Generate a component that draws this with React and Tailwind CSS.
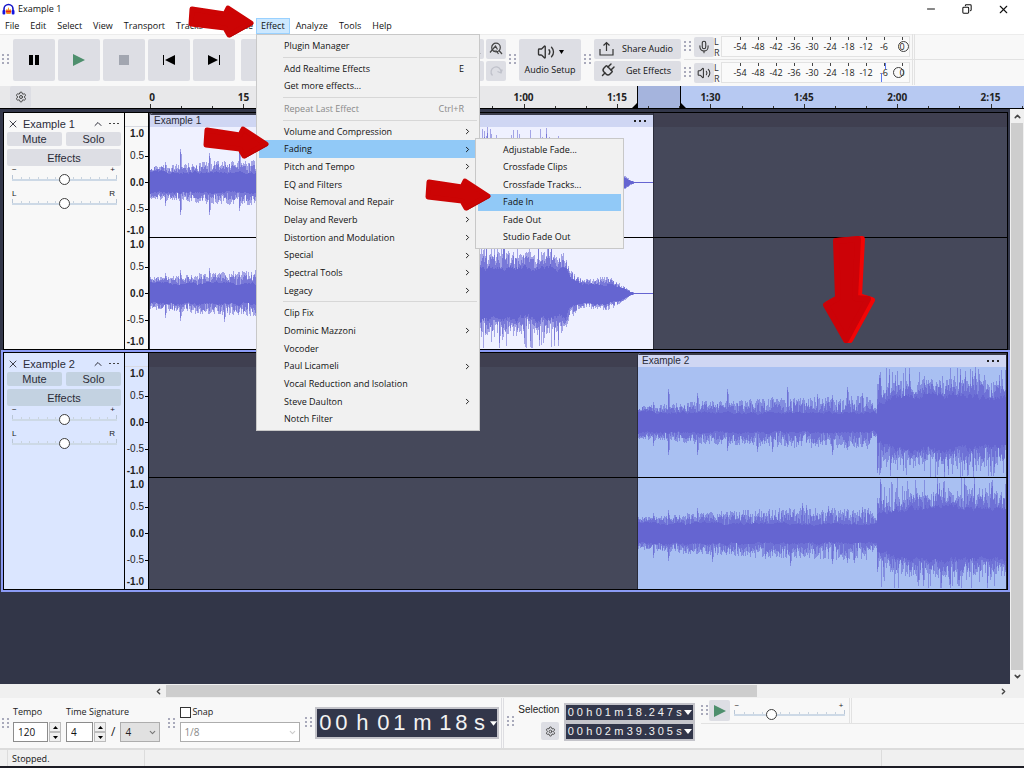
import React from 'react';
import { Settings, Plug, Mic, Volume2, Minus, X, ChevronUp, ChevronDown, ChevronLeft, ChevronRight, Copy } from 'lucide-react';

const MENUS_LEFT = ['File', 'Edit', 'Select', 'View', 'Transport', 'Tracks', 'Generate'];
const MENUS_RIGHT = ['Effect', 'Analyze', 'Tools', 'Help'];

const EFFECT_MENU = [
  { label: 'Plugin Manager' },
  null,
  { label: 'Add Realtime Effects', key: 'E' },
  { label: 'Get more effects...' },
  null,
  { label: 'Repeat Last Effect', key: 'Ctrl+R', disabled: true },
  null,
  { label: 'Volume and Compression', sub: true },
  { label: 'Fading', sub: true, active: true },
  { label: 'Pitch and Tempo', sub: true },
  { label: 'EQ and Filters', sub: true },
  { label: 'Noise Removal and Repair', sub: true },
  { label: 'Delay and Reverb', sub: true },
  { label: 'Distortion and Modulation', sub: true },
  { label: 'Special', sub: true },
  { label: 'Spectral Tools', sub: true },
  { label: 'Legacy', sub: true },
  null,
  { label: 'Clip Fix' },
  { label: 'Dominic Mazzoni', sub: true },
  { label: 'Vocoder' },
  { label: 'Paul Licameli', sub: true },
  { label: 'Vocal Reduction and Isolation' },
  { label: 'Steve Daulton', sub: true },
  { label: 'Notch Filter' },
];

const FADING_MENU = [
  { label: 'Adjustable Fade...' },
  { label: 'Crossfade Clips' },
  { label: 'Crossfade Tracks...' },
  { label: 'Fade In', active: true },
  { label: 'Fade Out' },
  { label: 'Studio Fade Out' },
];

const TIMES = ['0', '15', '30', '45', '1:00', '1:15', '1:30', '1:45', '2:00', '2:15'];
const DECIBELS = ['-54', '-48', '-42', '-36', '-30', '-24', '-18', '-12', '-6', '0'];

// --- waveform ---------------------------------------------------------

const RMS = [[0, 10], [238, 9], [239, 19], [258, 25], [300, 27], [365, 24], [415, 24], [419, 17], [432, 9], [458, 9], [468, 6], [475, 4], [480, 1], [485, 0], [504, 0]];
const PEAK = [[0, 16], [60, 21], [150, 25], [230, 26], [238, 14], [239, 38], [260, 42], [330, 44], [414, 40], [419, 25], [432, 14], [458, 17], [468, 11], [475, 6], [480, 2], [485, 0], [504, 0]];

// [channel][up / down]: x offset -> height of the beats that stick out
const SPIKES = [
  [
    { 15: 20, 30: 33, 59: 29, 89: 33, 120: 22, 134: 25, 149: 35, 164: 22, 179: 28, 194: 27, 209: 35, 224: 29, 241: 47 },
    { 15: 23, 30: 32, 59: 32, 89: 28, 119: 29, 134: 29, 149: 24, 164: 18, 194: 32, 209: 27, 224: 24, 239: 50, 242: 50 },
  ],
  [
    { 15: 20, 30: 23, 59: 25, 89: 21, 119: 19, 164: 30, 168: 28, 190: 27, 209: 24, 224: 26, 242: 54 },
    { 15: 24, 30: 27, 59: 20, 74: 28, 89: 18, 127: 25, 152: 32, 194: 30, 209: 29, 216: 29, 239: 38 },
  ],
];

function at(points, x) {
  for (let i = 1; i < points.length; i++) {
    const [x0, y0] = points[i - 1];
    const [x1, y1] = points[i];
    if (x <= x1) return y0 + ((y1 - y0) * (x - x0)) / (x1 - x0);
  }
  return 0;
}

function buildWave(channel, length) {
  let seed = 7919 + channel * 104729;
  const rand = () => {
    seed = (seed * 1664525 + 1013904223) % 4294967296;
    return seed / 4294967296;
  };
  const mid = 55;
  const slow = [1, 1];
  let core = '';
  let strong = '';
  let faint = '';
  for (let x = 0; x < length; x++) {
    const rms = at(RMS, x);
    const peak = at(PEAK, x);
    const loud = x > 240 && x < 410;
    const half = [0, 1].map((side) => {
      // the level wanders slowly, so that neighbouring columns look alike
      slow[side] = slow[side] * 0.7 + (0.65 + rand() * 0.7) * 0.3;
      const c = rms * slow[side];
      let s = c + (peak - c) * rand() * 0.7;
      let p = s + (peak - s) * rand();
      if (loud && rand() > 0.74) {
        p = 42 + rand() * 14;
        if (rand() > 0.6) s = p - 6;
      }
      const spike = SPIKES[channel][side][x];
      const tail = SPIKES[channel][side][x - 1];
      if (spike) {
        p = spike;
        s = spike - 3;
      } else if (tail) {
        p = Math.max(p, tail - 5);
      }
      return [c, s, p].map((v) => Math.max(0, Math.min(55, Math.round(Math.max(v, c)))));
    });
    const [[cu, su, pu], [cd, sd, pd]] = half;
    core += `M${x} ${mid - cu}h1v${cu + cd + 1}h-1z`;
    strong += `M${x} ${mid - su}h1v${su + sd + 1}h-1z`;
    faint += `M${x} ${mid - pu}h1v${pu + pd + 1}h-1z`;
  }
  return { core, strong, faint };
}

const WAVES = [buildWave(0, 504), buildWave(1, 504)];

function Waveform({ channel }) {
  const wave = WAVES[channel];
  return (
    <svg className="block" width="504" height="110" shapeRendering="crispEdges" aria-hidden="true">
      <path d={wave.faint} fill="#6565d1" fillOpacity="0.55" />
      <path d={wave.strong} fill="#6565d1" fillOpacity="0.7" />
      <path d={wave.core} fill="#6565d1" />
    </svg>
  );
}

// --- small parts ------------------------------------------------------

function Grip() {
  return (
    <svg className="shrink-0" width="7" height="12" fill="#a9aabb" aria-hidden="true">
      {[0, 4, 8].map((y) => (
        <React.Fragment key={y}>
          <rect x="0" y={y} width="2" height="2" />
          <rect x="5" y={y} width="2" height="2" />
        </React.Fragment>
      ))}
    </svg>
  );
}

const TOOL_BUTTON = 'flex items-center justify-center shrink-0 rounded-[2px] bg-[#dddee4]';

function TransportButton({ label, children }) {
  return (
    <button aria-label={label} className={`${TOOL_BUTTON} w-[42px] h-[42px]`}>
      <svg width="20" height="14" viewBox="0 0 20 14">{children}</svg>
    </button>
  );
}

function ZoomGlyph({ kind }) {
  if (kind === 'redo' || kind === 'undo') {
    return (
      <svg width="14" height="14" viewBox="0 0 14 14" fill="none" stroke={kind === 'redo' ? '#bfc1ca' : '#555'} strokeWidth="1.3">
        <path d={kind === 'redo' ? 'M3.5 11.5A5 5 0 1 1 12 8.5M8.5 7.5l3.5 1.5 1.2-3.5' : 'M10.5 11.5A5 5 0 1 0 2 8.5M5.5 7.5L2 9 .8 5.5'} />
      </svg>
    );
  }
  return (
    <svg width="14" height="14" viewBox="0 0 14 14" fill="none" stroke="#444" strokeWidth="1.2">
      <circle cx="7" cy="5.5" r="4.3" />
      <path d="M10 8.5l3 3.5M1 10.5L6.5 4 8.5 7.5M4 9h3.5l2 3" />
    </svg>
  );
}

const THUMB =
  'absolute inset-0 w-full h-full appearance-none bg-transparent [&::-webkit-slider-thumb]:appearance-none [&::-webkit-slider-thumb]:w-[11px] [&::-webkit-slider-thumb]:h-[11px] [&::-webkit-slider-thumb]:rounded-full [&::-webkit-slider-thumb]:border [&::-webkit-slider-thumb]:border-solid [&::-webkit-slider-thumb]:border-[#3f3f3f]';

function Slider({ label, left, right, value = 50 }) {
  return (
    <div className="w-full">
      <div className="flex justify-between h-2 pr-[2px] text-[8px] leading-[8px] text-[#222]">
        <span>{left}</span>
        <span>{right}</span>
      </div>
      <div className="relative h-[11px]">
        <div className="flex justify-between items-end h-[7px] border-b-2 border-[#cdd9e6]">
          {Array.from({ length: 13 }, (_, i) => (
            <span key={i} className={i % 12 === 0 ? 'w-px h-1 bg-[#b9c6d6]' : 'w-px h-[2px] bg-[#c9d3de]'} />
          ))}
        </div>
        <input type="range" aria-label={label} defaultValue={value} className={`${THUMB} [&::-webkit-slider-thumb]:bg-white`} />
      </div>
    </div>
  );
}

function Meter({ label, icon, level, children }) {
  return (
    <div className="flex items-center h-[25px]">
      <Grip />
      <button aria-label={label} className={`${TOOL_BUTTON} w-5 h-5 ml-[3px] text-[#333]`}>{icon}</button>
      <div className="flex flex-col w-[7px] text-[9px] leading-[11px] text-[#333]">
        <span>L</span>
        <span>R</span>
      </div>
      <div className="relative flex items-center w-[189px] h-[21px] pl-[9px] border border-[#e2e2e2] bg-[#fafafa] text-[9px] leading-[9px] text-[#222]">
        {DECIBELS.map((db) => (
          <div key={db} className="flex flex-col items-center w-[18px] h-full shrink-0">
            <span className="w-px h-[3px] bg-[#444]" />
            <span className="mt-[2px]">{db}</span>
          </div>
        ))}
        {children}
        <input type="range" aria-label={`${label} level`} defaultValue={level} className={THUMB} />
      </div>
    </div>
  );
}

// --- tracks -----------------------------------------------------------

function ScaleColumn({ selected }) {
  return (
    <div className={`flex flex-col w-6 shrink-0 border-r border-black text-[10px] leading-[12px] text-[#222] ${selected ? 'bg-[#dbe6ff]' : 'bg-[#f8f8f8]'}`}>
      <div className="h-[14px] border-b border-[#d8dae2]" />
      {[0, 1].map((ch) => (
        <div key={ch} className="flex-1 grid grid-rows-[14fr_30fr_23fr_30fr_14fr] items-center justify-items-end">
          {['1.0', '0.5', '0.0', '-0.5', '-1.0'].map((v) => (
            <div key={v} className={`flex items-center gap-px ${v.endsWith('.5') ? '' : 'font-bold'}`}>
              {v}
              <span className={v === '1.0' || v === '-1.0' ? 'w-[3px]' : 'w-[3px] h-px bg-black'} />
            </div>
          ))}
        </div>
      ))}
    </div>
  );
}

function Clip({ name, selected, className }) {
  return (
    <div className={`flex flex-col min-w-0 overflow-hidden border-x border-[#2a2c3a] rounded-tl-[4px] ${selected ? 'bg-[#a9c0f2]' : 'bg-[#eff1ff]'} ${className}`}>
      <div className="flex items-center justify-between h-[14px] shrink-0 pl-1 pr-[7px] border-t-2 border-[#3a3c4c] bg-[#cfd6f3] text-[10px] leading-[12px] text-[#2b2c38]">
        <span>{name}</span>
        <svg width="12" height="2" fill="#222" aria-hidden="true">
          <rect width="2" height="2" />
          <rect x="5" width="2" height="2" />
          <rect x="10" width="2" height="2" />
        </svg>
      </div>
      <div className="flex-1 overflow-hidden"><Waveform channel={0} /></div>
      <div className="flex-1 overflow-hidden"><Waveform channel={1} /></div>
    </div>
  );
}

function Track({ name, selected, children }) {
  const button = `flex items-center justify-center rounded-[2px] ${selected ? 'bg-[#c3d2e1]' : 'bg-[#dddee4]'}`;
  return (
    <section className={`border-2 ${selected ? 'border-[#8b9bf5]' : 'border-[#33374a]'}`}>
      <div className="flex h-[238px] border border-black bg-[#45485a]">
        <div className={`w-[120px] shrink-0 pt-[2px] px-[3px] text-[11px] leading-[14px] text-[#2b2c38] ${selected ? 'bg-[#dbe6ff]' : 'bg-[#f8f8f8]'}`}>
          <div className="flex items-center h-[17px]">
            <button aria-label="Close track" className="w-4"><X size={12} strokeWidth={1.8} /></button>
            <span className="flex-1">{name}</span>
            <button aria-label="Collapse"><ChevronUp size={12} strokeWidth={2} /></button>
            <button aria-label="Track menu" className="pl-[5px] pr-[2px]">
              <svg width="10" height="2" fill="#444"><rect width="2" height="1" /><rect x="4" width="2" height="1" /><rect x="8" width="2" height="1" /></svg>
            </button>
          </div>
          <div className="grid grid-cols-2 gap-x-1 gap-y-[3px]">
            <button className={`${button} h-[14px]`}>Mute</button>
            <button className={`${button} h-[14px]`}>Solo</button>
            <button className={`${button} h-[17px] col-span-2`}>Effects</button>
          </div>
          <div className="flex flex-col gap-[5px] pl-[5px] pr-1">
            <Slider label={`${name} volume`} left="−" right="+" />
            <Slider label={`${name} pan`} left="L" right="R" />
          </div>
        </div>
        <div className="w-px bg-black" />
        <ScaleColumn selected={selected} />
        <div className="relative flex flex-1 min-w-0 bg-linear-to-b from-[#3f3f50] from-[14px] to-[#45485a] to-[14px]">
          {children}
          {/* line between the left and the right channel */}
          <div className="absolute inset-x-0 top-[124px] h-px bg-black" />
        </div>
      </div>
    </section>
  );
}

function Timeline() {
  return (
    <div className="relative flex h-[23px] shrink-0 border-b border-black bg-[#e8e8ea]">
      <button aria-label="Timeline options" className="flex items-center justify-center w-[21px] ml-[10px] rounded-[2px] bg-[#dddee4] text-[#444]">
        <Settings size={12} strokeWidth={2} />
      </button>
      <div className="absolute left-[637px] right-0 inset-y-0 bg-[#b7c9f2]" />
      <div className="absolute left-[637px] w-11 inset-y-0 border-x border-black bg-[#a5b4dd]" />
      <svg className="absolute left-[632px] bottom-0" width="54" height="5" aria-hidden="true">
        <path d="M0 5L5 0v5zM49 0l5 5h-5z" />
      </svg>
      {TIMES.map((t, i) => (
        <div key={t}>
          <span
            className="absolute top-1 w-10 -ml-5 text-center text-[10px] leading-[14px] font-bold text-[#222]"
            style={{ left: 150 + i * 93.4 + (i === 0 ? 2 : 0) }}
          >
            {t}
          </span>
          {[0, 1, 2].map((n) => (
            <span
              key={n}
              className={n === 0 ? 'absolute bottom-0 w-px h-1 bg-[#333]' : 'absolute bottom-0 w-px h-[2px] bg-[#333]'}
              style={{ left: Math.round(150 + (i + n / 3) * 93.4) }}
            />
          ))}
        </div>
      ))}
    </div>
  );
}

// --- bottom bar -------------------------------------------------------

function Stepper({ label, value, width }) {
  return (
    <div className="flex gap-px">
      <input aria-label={label} defaultValue={value} className={`${width} h-5 pl-1 border border-[#8c8c8c] bg-white text-[10px] text-[#111]`} />
      <div className="flex flex-col w-3">
        {['Increase', 'Decrease'].map((dir) => (
          <button key={dir} aria-label={`${dir} ${label}`} className="flex items-center justify-center h-[10px] border border-[#bcbcbc] bg-[#f0f0f0]">
            <svg width="5" height="3"><path d={dir === 'Increase' ? 'M0 3L2.5 0 5 3z' : 'M0 0h5L2.5 3z'} /></svg>
          </button>
        ))}
      </div>
    </div>
  );
}

// Every character sits in a cell of its own, units get wider cells than digits.
function TimeBox({ label, cells, className, arrow }) {
  return (
    <div className={`flex items-center border-2 border-[#c4c4ca] bg-[#32364a] text-[#f2f2f2] ${className}`}>
      {cells.map(([ch, width], i) => (
        <span key={i} className={`${width} text-center shrink-0`}>{ch}</span>
      ))}
      <button aria-label={label} className="ml-auto">
        <svg width={arrow} height="5" viewBox="0 0 8 5"><path d="M0 0h8L4 5z" fill="#fff" /></svg>
      </button>
    </div>
  );
}

const BIG = [['0', 'w-4'], ['0', 'w-4'], ['h', 'w-[26px]'], ['0', 'w-4'], ['1', 'w-4'], ['m', 'w-[30px]'], ['1', 'w-4'], ['8', 'w-4'], ['s', 'w-5']];

const small = (h, m, s, f) => [
  [h[0], 'w-[9px]'], [h[1], 'w-[9px]'], ['h', 'w-[10px]'],
  [m[0], 'w-[9px]'], [m[1], 'w-[9px]'], ['m', 'w-[13px]'],
  [s[0], 'w-[9px]'], [s[1], 'w-[9px]'], ['.', 'w-1'],
  [f[0], 'w-[9px]'], [f[1], 'w-[9px]'], [f[2], 'w-[9px]'], ['s', 'w-[9px]'],
];

function BottomBar() {
  return (
    <div className="flex items-start h-[52px] shrink-0 border-b-2 border-[#dcdcdc] bg-[#f8f8f8] text-[9px] text-[#222]">
      <div className="flex items-center h-[52px] pl-[2px]">
        <Grip />
        <div className="flex flex-col gap-1 pl-1">
          <div className="flex leading-[12px]">
            <span className="w-[53px]">Tempo</span>
            <span>Time Signature</span>
          </div>
          <div className="flex items-center gap-[5px]">
            <Stepper label="Tempo" value="120" width="w-[35px]" />
            <Stepper label="Beats" value="4" width="w-[27px]" />
            <span className="text-[12px] leading-[12px]">/</span>
            <div className="relative">
              <select aria-label="Beat unit" className="appearance-none block w-10 h-5 pl-1 border border-[#adadad] bg-[#e1e1e1] text-[10px]" defaultValue="4">
                <option>4</option>
              </select>
              <ChevronDown size={9} strokeWidth={3} className="absolute right-[3px] top-[6px] pointer-events-none text-[#777]" />
            </div>
          </div>
        </div>
      </div>
      <div className="flex items-center h-[52px] pl-2">
        <Grip />
        <div className="flex flex-col gap-1 pl-[5px]">
          <label className="flex items-center gap-px leading-[12px]">
            <input type="checkbox" className="appearance-none w-[11px] h-[11px] border border-[#333] bg-white" />
            Snap
          </label>
          <div className="relative">
            <select aria-label="Snap to" disabled className="appearance-none block w-[120px] h-5 pl-[3px] border border-[#adadad] bg-white text-[10px] text-[#8a8a8a] opacity-100" defaultValue="1/8">
              <option>1/8</option>
            </select>
            <ChevronDown size={9} strokeWidth={3} className="absolute right-[3px] top-[6px] pointer-events-none text-[#ccc]" />
          </div>
        </div>
      </div>
      <div className="flex items-center h-[50px] pl-[5px] font-['Liberation_Sans',sans-serif]">
        <Grip />
        <TimeBox label="Audio position format" cells={BIG} arrow={7} className="w-[184px] h-8 ml-[3px] text-[22px] leading-[28px]" />
      </div>
      <div className="w-[3px] h-[50px] ml-[2px] border-x border-[#dedee2]" />
      <div className="flex items-center h-[48px] pl-[3px] font-['Liberation_Sans',sans-serif] text-[10px]">
        <Grip />
        <div className="flex flex-col items-end gap-[6px] w-[45px]">
          <span className="leading-[12px]">Selection</span>
          <button aria-label="Selection options" className={`${TOOL_BUTTON} w-[18px] h-[18px] text-[#444]`}><Settings size={11} strokeWidth={2} /></button>
        </div>
        <div className="flex flex-col pl-[5px] text-[11px]">
          <TimeBox label="Start format" arrow={8} cells={small('00', '01', '18', '247')} className="w-[131px] h-[19px] pr-px" />
          <TimeBox label="End format" arrow={8} cells={small('00', '02', '39', '305')} className="w-[131px] h-[19px] pr-px" />
        </div>
      </div>
      <div className="flex-1 pl-[6px]">
        <div className="flex items-center h-[26px] border-b border-[#e2e2e2]">
          <Grip />
          <button aria-label="Play at speed" className={`${TOOL_BUTTON} w-[21px] h-[21px] ml-px`}>
            <svg width="12" height="12"><path d="M0 0l12 6-12 6z" fill="#4e8f6d" /></svg>
          </button>
          <div className="w-[111px] ml-1"><Slider label="Playback speed" left="−" right="+" value={32} /></div>
          <div className="w-[3px] h-full ml-1 border-x border-[#e2e2e2]" />
        </div>
      </div>
    </div>
  );
}

// --- menus ------------------------------------------------------------

function MenuItem({ item }) {
  return (
    <button
      role="menuitem"
      className={`flex-1 flex items-center w-full pl-[25px] pr-[5px] text-left leading-[12px] ${item.active ? 'bg-[#91c9f7]' : ''} ${item.disabled ? 'text-[#8a8a8a]' : 'text-[#111]'}`}
    >
      <span className="flex-1">{item.label}</span>
      {item.key && <span className="pr-2">{item.key}</span>}
      {item.sub && <ChevronRight size={9} strokeWidth={2.5} />}
    </button>
  );
}

function MenuBarButton({ label }) {
  return (
    <button className={`px-1 border ${label === 'Effect' ? 'bg-[#cce8ff] border-[#99d1ff]' : 'border-transparent'}`}>{label}</button>
  );
}

// --- callout arrows ---------------------------------------------------

function RightArrow({ className }) {
  return (
    <svg className={`absolute z-30 pointer-events-none ${className}`} width="68" height="36" viewBox="0 0 68 36" aria-hidden="true">
      <path d="M4 5L37 10 40 4 63 19 41 31 37 24 3 20z" fill="#cc0404" stroke="#cc0404" strokeWidth="5" strokeLinejoin="round" />
      <path d="M42 33L65 20" stroke="#b80303" strokeWidth="1" strokeLinecap="round" />
    </svg>
  );
}

function DownArrow() {
  return (
    <svg className="absolute z-30 left-[822px] top-[236px] pointer-events-none" width="56" height="112" viewBox="0 0 56 112" aria-hidden="true">
      <path d="M15 5L40 3 37 60 50 64 28 104 24 104 6 68 17 62z" fill="#f20505" stroke="#f20505" strokeWidth="6" strokeLinejoin="round" />
      <path d="M14 5L36 3 33 62 46 63 24 104 4 69 16 62z" fill="#cc0207" stroke="#cc0207" strokeWidth="6" strokeLinejoin="round" />
    </svg>
  );
}

export default function App() {
  return (
    <div className="relative flex flex-col h-screen overflow-hidden bg-white text-[9px] font-['Open_Sans',sans-serif] text-[#111]">
      {/* Title bar */}
      <header className="flex items-center h-[18px] shrink-0 pl-[2px] text-[10px]">
        <svg width="13" height="12" viewBox="0 0 13 12" aria-hidden="true">
          <path d="M2 8V6a4.5 4.5 0 0 1 9 0v2" fill="none" stroke="#1414c8" strokeWidth="1.6" />
          <path d="M3.5 8l1-2 1 1 1-3 1 3 1-1 1 2-1 3h-4z" fill="#f7931e" />
          <path d="M4 8.5h5" stroke="#e8201a" strokeWidth="1.5" />
          <rect x=".5" y="7" width="2.8" height="4.5" rx="1" fill="#1414e0" />
          <rect x="9.7" y="7" width="2.8" height="4.5" rx="1" fill="#1414e0" />
        </svg>
        <h1 className="pl-[3px] flex-1 text-[9px]">Example 1</h1>
        <div className="flex items-center gap-[25px] pr-[14px]">
          <button aria-label="Minimize"><Minus size={12} strokeWidth={2} /></button>
          <button aria-label="Restore"><Copy size={10} strokeWidth={2.5} className="-scale-x-100" /></button>
          <button aria-label="Close"><X size={13} strokeWidth={2} /></button>
        </div>
      </header>

      {/* Menu bar */}
      <nav className="flex h-4 shrink-0 leading-[14px]">
        <div className="flex gap-px w-64">
          {MENUS_LEFT.map((m) => <MenuBarButton key={m} label={m} />)}
        </div>
        <div className="flex gap-px">
          {MENUS_RIGHT.map((m) => <MenuBarButton key={m} label={m} />)}
        </div>
      </nav>

      {/* Toolbars */}
      <div className="flex items-center h-[52px] shrink-0 pb-[2px] border-t border-[#ececec] bg-[#f8f8f8]">
        <div className="flex items-center justify-between w-[506px] shrink-0 pl-[2px]">
          <div className="flex items-center gap-[3px]">
            <div className="pr-px"><Grip /></div>
            <TransportButton label="Pause"><path d="M5 2h4v10H5zM11 2h4v10h-4z" /></TransportButton>
            <TransportButton label="Play"><path d="M4 1l12 6-12 6z" fill="#4e8f6d" /></TransportButton>
            <TransportButton label="Stop"><path d="M5 2h10v10H5z" fill="#a2a6b0" /></TransportButton>
            <TransportButton label="Skip to start"><path d="M4 2h1v10H4zM16 2v10L6 7z" /></TransportButton>
            <TransportButton label="Skip to end"><path d="M15 2h1v10h-1zM4 2v10l10-5z" /></TransportButton>
            <div className="pl-[3px]"><TransportButton label="Record"><circle cx="10" cy="7" r="6" fill="#c8323c" /></TransportButton></div>
          </div>
          <div className="grid grid-cols-2 gap-[2px] text-[#444]">
            {['out', 'toggle', 'undo', 'redo'].map((k) => (
              <button key={k} aria-label={k} className={`${TOOL_BUTTON} w-5 h-5`}><ZoomGlyph kind={k} /></button>
            ))}
          </div>
        </div>
        <div className="flex items-center gap-[3px] pl-[3px]">
          <Grip />
          <button className={`${TOOL_BUTTON} flex-col gap-[2px] w-[62px] h-[42px]`}>
            <span className="flex items-center gap-1">
              <Volume2 size={18} strokeWidth={1.8} className="text-[#333]" />
              <svg width="5" height="4"><path d="M0 0h5L2.5 4z" /></svg>
            </span>
            <span className="leading-[13px]">Audio Setup</span>
          </button>
        </div>
        <div className="flex items-center gap-[3px] pl-[3px]">
          <Grip />
          <div className="flex flex-col gap-[2px]">
            <button className={`${TOOL_BUTTON} w-[87px] h-5 pl-[5px]`}>
              <svg width="15" height="15" viewBox="0 0 15 15" fill="none" stroke="#333" strokeWidth="1.2">
                <path d="M1 8v6h13V8M7.5 10V1.5M4.5 4.5l3-3 3 3" />
              </svg>
              <span className="flex-1 text-center">Share Audio</span>
            </button>
            <button className={`${TOOL_BUTTON} w-[87px] h-5 pl-[5px]`}>
              <Plug size={17} strokeWidth={2} className="rotate-45 text-[#333]" />
              <span className="flex-1 text-center">Get Effects</span>
            </button>
          </div>
        </div>
        <div className="flex flex-col flex-1 pl-[3px]">
          <div className="flex border-b border-[#e2e2e2]">
            <Meter label="Record meter" level={100} icon={<Mic size={14} strokeWidth={1.8} />} />
            <div className="w-[3px] ml-[2px] border-x border-[#e2e2e2]" />
          </div>
          <div className="flex">
            <Meter label="Playback meter" level={97} icon={<Volume2 size={14} strokeWidth={1.8} />}>
              <span className="absolute left-[163px] top-0 w-px h-[6px] bg-[#5a78f0]" />
              <span className="absolute left-[159px] bottom-0 w-px h-[9px] bg-[#5a78f0]" />
            </Meter>
            <div className="w-[3px] ml-[2px] border-x border-[#e2e2e2]" />
          </div>
        </div>
      </div>

      <Timeline />

      {/* Track area */}
      <main className="flex flex-1 min-h-0 bg-[#323648] font-['Liberation_Sans',sans-serif]">
        <div className="flex-1 min-w-0 pl-px pt-px">
          <Track name="Example 1">
            <Clip name="Example 1" className="w-[505px]" />
          </Track>
          <div className="-mt-[2px]">
            <Track name="Example 2" selected>
              <Clip name="Example 2" selected className="flex-1 ml-[488px]" />
            </Track>
          </div>
        </div>
        <div className="flex flex-col items-center w-[14px] shrink-0 py-px bg-[#f0f0f0] text-[#444]">
          <button aria-label="Scroll up" className="py-[2px]"><ChevronUp size={9} strokeWidth={4} /></button>
          <div className="flex-1 w-3 bg-[#cdcdcd]" />
          <button aria-label="Scroll down" className="py-[2px]"><ChevronDown size={9} strokeWidth={4} /></button>
        </div>
      </main>

      {/* Horizontal scroll */}
      <div className="flex items-center h-[14px] shrink-0 pl-[154px] pr-4 bg-[#f0f0f0] text-[#444]">
        <button aria-label="Scroll left" className="w-3"><ChevronLeft size={9} strokeWidth={4} /></button>
        <div className="flex-1"><div className="w-[591px] h-3 bg-[#cdcdcd]" /></div>
        <button aria-label="Scroll right"><ChevronRight size={9} strokeWidth={4} /></button>
      </div>

      <BottomBar />

      {/* Status bar */}
      <footer className="flex h-[18px] shrink-0 border-b-2 border-[#1c1c24] bg-[#f0f0f0] leading-[18px]">
        <span className="w-[7px]" />
        <span className="w-[137px] pl-1 border-l border-[#dcdcdc]">Stopped.</span>
        <span className="flex-1 border-l border-[#dcdcdc]" />
        <span className="w-[143px] border-l border-[#dcdcdc]" />
      </footer>

      {/* Effect menu and its Fading submenu */}
      <div role="menu" className="absolute z-10 left-64 top-[34px] flex flex-col w-56 h-[397px] p-[2px] border border-[#c8c8c8] bg-[#f1f1f1]">
        {EFFECT_MENU.map((item, i) =>
          item ? <MenuItem key={item.label} item={item} /> : <div key={i} className="flex items-center h-[5px] pl-6"><div className="w-full h-px bg-[#d7d7d7]" /></div>
        )}
      </div>
      <div role="menu" className="absolute z-20 left-[475px] top-[138px] flex flex-col w-[149px] h-[111px] p-[2px] border border-[#c8c8c8] bg-[#f1f1f1]">
        {FADING_MENU.map((item) => <MenuItem key={item.label} item={item} />)}
      </div>

      <RightArrow className="left-[188px] top-1" />
      <RightArrow className="left-[203px] top-[125px]" />
      <RightArrow className="left-[425px] top-[177px]" />
      <DownArrow />
    </div>
  );
}
